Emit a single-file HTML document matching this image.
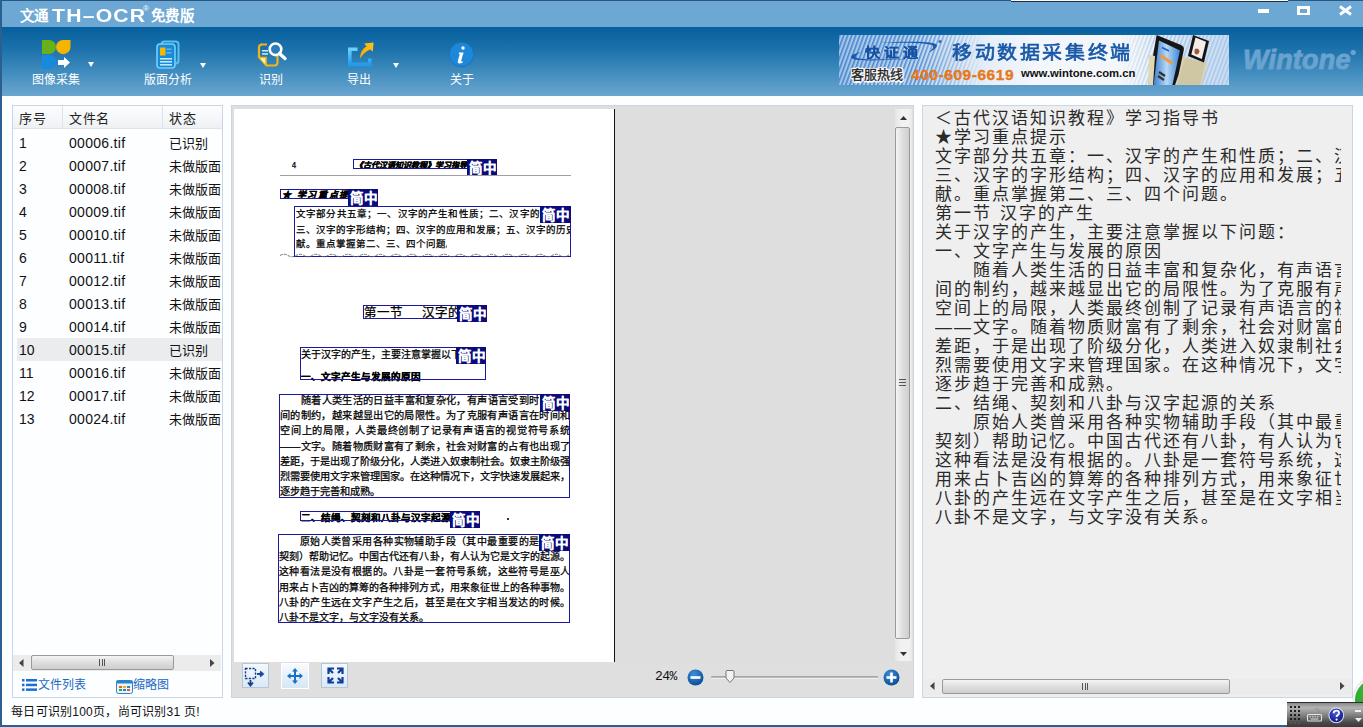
<!DOCTYPE html>
<html lang="zh-CN"><head><meta charset="utf-8">
<style>
*{margin:0;padding:0;box-sizing:border-box}
html,body{width:1363px;height:727px;overflow:hidden;background:#fdfeff;font-family:"Liberation Sans",sans-serif;position:relative}
.a{position:absolute}
.nw{white-space:nowrap}
#titlebar{left:0;top:0;width:1363px;height:27px;background:#6da8d5;border-top:1px solid #2a5780}
#toolbar{left:0;top:27px;width:1363px;height:69px;background:linear-gradient(#06609d 0%,#1a70aa 30%,#3a88bb 60%,#6ba6d0 100%)}
#lborder{left:0;top:0;width:2px;height:727px;background:#2b5f8e}
#bborder{left:0;top:725px;width:1363px;height:2px;background:#2b5f8e}
.tbtxt{color:#fff;font-size:12px;line-height:14px;letter-spacing:0px}
.tri{width:0;height:0;border-left:3.5px solid transparent;border-right:3.5px solid transparent;border-top:5px solid #fff}
.panel{border:1px solid #c9d7e4}
.row{position:absolute;left:0;height:23px;width:222px;white-space:nowrap;font-size:14px;line-height:23px;color:#111}
.row span{position:absolute}.row span+span{letter-spacing:0.3px}.row span+span+span{letter-spacing:0;font-size:13px}
.sb-h{background:#ebebeb}
.thumbh{background:linear-gradient(#f4f4f4,#dcdcdc 55%,#cfcfcf);border:1px solid #9a9a9a;border-radius:2px}
.thumbv{background:linear-gradient(90deg,#f4f4f4,#dcdcdc 55%,#cfcfcf);border:1px solid #9a9a9a;border-radius:2px}
.doc{font-size:10.4px;line-height:15.3px;color:#000;white-space:nowrap;overflow:hidden;-webkit-text-stroke:0.25px #000}
.bx{position:absolute;border:1px solid #1a1aa0}
.lbl{position:absolute;background:#0b0b7e;color:#fff;font-weight:bold;-webkit-text-stroke:0.2px #fff;font-size:13.5px;text-align:center;letter-spacing:1.5px;text-indent:1.5px;white-space:nowrap;overflow:hidden;padding-top:1px}
#rtext{left:935px;top:109px;width:406px;height:560px;overflow:hidden;font-size:17px;line-height:19px;letter-spacing:2px;color:#2a2a2a;white-space:nowrap}
</style></head><body>

<!-- title bar -->
<div id="titlebar" class="a"></div>
<div class="a nw" style="left:20px;top:8px;color:#fff;font-weight:bold;font-size:14.5px;line-height:16px;letter-spacing:0.3px">文通</div><div id="thocr" class="a nw" style="left:52px;top:7px;color:#fff;font-weight:bold;font-size:17.5px;line-height:19px;transform:scaleX(1.21);transform-origin:0 0;letter-spacing:1px">TH–OCR</div><div class="a nw" style="left:143px;top:5px;color:#fff;font-size:8px;line-height:8px">®</div><div class="a nw" style="left:151px;top:8px;color:#fff;font-weight:bold;font-size:14.5px;line-height:16px;letter-spacing:0.3px">免费版</div>
<div class="a" style="left:1011px;top:0;width:277px;height:1px;background:#fafafa"></div><div class="a" style="left:1011px;top:1px;width:277px;height:1px;background:#1c2f44"></div>
<!-- window controls -->
<div class="a" style="left:1258px;top:9px;width:11px;height:4px;background:#fff"></div>
<div class="a" style="left:1297px;top:6px;width:13px;height:9px;border:3px solid #fff;border-top-width:3.5px;border-bottom-width:2px"></div>
<svg class="a" style="left:1338px;top:5px" width="15" height="11" viewBox="0 0 15 11"><path d="M2 1.5 L13 9.5 M13 1.5 L2 9.5" stroke="#fff" stroke-width="2.8"/></svg>

<!-- toolbar -->
<div id="toolbar" class="a"></div>

<!-- icon 1 -->
<svg class="a" style="left:40px;top:38px" width="34" height="34" viewBox="0 0 34 34">
<path d="M2 2 H9 A7 7 0 0 1 9 16 H2 Z" fill="#6ab018"/>
<path d="M30.5 2 V9 A7 7 0 0 1 16 9 A7 7 0 0 1 23 2 Z" fill="#f5b400"/>
<path d="M2 17 H9 A7 7 0 0 1 9 31 H2 Z" fill="#1789de"/>
<path d="M18 22 H24 V19 L30 24.5 L24 30 V27 H18 Z" fill="#fff"/>
</svg>
<div class="a tri" style="left:87.5px;top:62px"></div>
<div class="a tbtxt nw" style="left:32px;top:73px">图像采集</div>

<!-- icon 2 -->
<svg class="a" style="left:154px;top:39px" width="28" height="32" viewBox="0 0 28 32">
<rect x="7.5" y="2.5" width="17" height="22" rx="3" fill="none" stroke="#58c1f2" stroke-width="2"/>
<rect x="3" y="5" width="18" height="24" rx="3" fill="#1b8ad6" stroke="#6fd0ff" stroke-width="1.6"/>
<rect x="6" y="8.5" width="5.5" height="8" fill="#f7b800"/>
<rect x="12.5" y="9.5" width="5" height="1.6" fill="#5ab8ee"/>
<rect x="12.5" y="13" width="5" height="1.6" fill="#5ab8ee"/>
<rect x="6" y="19" width="12" height="1.6" fill="#bfe8ff"/>
<rect x="6" y="22" width="12" height="1.6" fill="#bfe8ff"/>
<rect x="6" y="25" width="12" height="1.6" fill="#bfe8ff"/>
</svg>
<div class="a tri" style="left:199.5px;top:62.5px"></div>
<div class="a tbtxt nw" style="left:144px;top:73px">版面分析</div>

<!-- icon 3 -->
<svg class="a" style="left:256px;top:40px" width="32" height="30" viewBox="0 0 32 30">
<path d="M5 4.5 H11 M3 7 V17 L10.5 25.5 H19 A3 3 0 0 0 21.5 22.5 V16" fill="none" stroke="#f2b418" stroke-width="2.2" stroke-linejoin="round"/>
<path d="M3 7 A3 3 0 0 1 6 4.5" fill="none" stroke="#f2b418" stroke-width="2.2"/>
<path d="M3.5 17.5 L10 17.5 L10 25" fill="#fff3b0" stroke="#f2b418" stroke-width="1.6"/>
<rect x="6" y="10" width="6" height="1.5" fill="#cfeaff"/>
<rect x="6" y="13.2" width="6" height="1.5" fill="#cfeaff"/>
<circle cx="19.5" cy="9.3" r="5.8" fill="#2a7db8" stroke="#fff" stroke-width="2.6"/>
<path d="M23.5 13.5 L29 18.5" stroke="#fff" stroke-width="3.4" stroke-linecap="round"/>
</svg>
<div class="a tbtxt nw" style="left:259px;top:73px">识别</div>

<!-- icon 4 -->
<svg class="a" style="left:346px;top:40px" width="30" height="28" viewBox="0 0 30 28">
<defs><linearGradient id="g4" x1="0" y1="0" x2="0" y2="1"><stop offset="0" stop-color="#6cd0ff"/><stop offset="1" stop-color="#1f9cec"/></linearGradient>
<linearGradient id="g4b" x1="0" y1="1" x2="1" y2="0"><stop offset="0" stop-color="#f5a800"/><stop offset="1" stop-color="#ffc21a"/></linearGradient></defs>
<path d="M11.5 9.2 H3.8 V24.4 H23.8 V18.5" fill="none" stroke="url(#g4)" stroke-width="3.6"/>
<path d="M14 18.5 C14.2 12.5 16.8 8.6 20.6 6.6 L18.2 3.6 L27.6 2.4 L26.8 11.8 L24.2 9.4 C20.2 11 16.8 14 14 18.5 Z" fill="url(#g4b)"/>
</svg>
<div class="a tri" style="left:392.5px;top:62.5px"></div>
<div class="a tbtxt nw" style="left:347px;top:73px">导出</div>

<!-- icon 5 -->
<svg class="a" style="left:448px;top:41px" width="28" height="28" viewBox="0 0 28 28">
<circle cx="13.5" cy="13.5" r="12.2" fill="#1e88d8" stroke="#1470b8" stroke-width="0.8"/>
<circle cx="15" cy="7" r="1.7" fill="#fff"/>
<path d="M11 11.5 H15.6 L13.2 19.5 Q13 21 14.8 20.4 L14.6 21.7 Q12.5 22.6 10.6 22.3 Q9.2 21.9 9.8 20 L11.7 13.2 L10.8 13 Z" fill="#fff"/>
</svg>
<div class="a tbtxt nw" style="left:450px;top:73px">关于</div>

<!-- banner -->
<div class="a" style="left:839px;top:35px;width:390px;height:50px;overflow:hidden;background:linear-gradient(90deg,#a2c4ea 0%,#b9d3ee 18%,#dfeaf6 32%,#f3f6fa 50%,#f4f7fa 75%,#d6e6f6 90%,#c9dcf2 100%)">
<svg class="a" style="left:0;top:0" width="390" height="50" viewBox="0 0 390 50">
<defs>
<pattern id="st" width="4" height="50" patternUnits="userSpaceOnUse" patternTransform="skewX(-20)"><rect x="0" y="0" width="1.7" height="50" fill="#4a86cc"/></pattern>
<pattern id="st2" width="4" height="50" patternUnits="userSpaceOnUse" patternTransform="skewX(-20)"><rect x="0" y="0" width="1.6" height="50" fill="#a9c6e8"/></pattern>
<linearGradient id="fd" x1="0" x2="1"><stop offset="0" stop-color="#fff" stop-opacity="1"/><stop offset="0.55" stop-color="#fff" stop-opacity="0.9"/><stop offset="1" stop-color="#fff" stop-opacity="0"/></linearGradient>
<mask id="mk"><rect x="0" y="0" width="145" height="50" fill="url(#fd)"/></mask>
<linearGradient id="fd2" x1="0" x2="1"><stop offset="0" stop-color="#fff" stop-opacity="0"/><stop offset="0.4" stop-color="#fff" stop-opacity="1"/></linearGradient>
<mask id="mk2"><rect x="280" y="0" width="110" height="50" fill="url(#fd2)"/></mask>
<linearGradient id="scr" x1="0" y1="0" x2="1" y2="0"><stop offset="0" stop-color="#3a7fd0"/><stop offset="0.5" stop-color="#b6d8f4"/><stop offset="1" stop-color="#3f86d6"/></linearGradient>
</defs>
<rect x="0" y="0" width="145" height="50" fill="url(#st)" mask="url(#mk)"/>
<rect x="280" y="0" width="110" height="50" fill="url(#st2)" mask="url(#mk2)"/>
<path d="M22 17 C14 19 10 21 13 23.5 C18 26.5 45 25.5 72 23.8 C48 24.5 20 25 17 22.5 C15.5 21 18 19 22 17 Z" fill="#1a5aae"/>
<path d="M41 8 C60 6.5 90 6 97 9 C100 11 95 15 90 17.5 C93 14.5 96 11.5 93 10 C88 8 60 7.5 41 8 Z" fill="#1a5aae"/>
<circle cx="101" cy="6.5" r="1.6" fill="#3a6fb8"/>
<g>
<path d="M343 21.6 L368.8 27.8 L362.6 50 L334 50 Z" fill="#d9d2b4"/>
<path d="M346 23 L366 28 L361 50 L338 50 Z" fill="#cfc6a4"/>
<path d="M354 0 L370 6 L365 27.5 L349 21 Z" fill="#151515"/>
<path d="M356.5 2.5 L367 6.8 L362.8 24 L352.3 19.5 Z" fill="#f3eee9"/>
<path d="M356 14 Q359 12.5 360.5 16 Q360 19.5 357 19.5 Q354.5 18 356 14 Z" fill="#9a5a3a"/>
<path d="M317.6 0 L342 10 Q345.5 11.5 344.8 15 L339.5 40 L336 50 L309 50 Z" fill="#161616"/>
<path d="M320 5.5 L341 15.5 L333.4 50 L314.5 50 Z" fill="url(#scr)"/>
<path d="M323 12.5 L330 16" stroke="#1f5cb8" stroke-width="1.4"/>
<path d="M321.5 20.5 L333.5 28.5" stroke="#f39a3a" stroke-width="3.2"/>
<path d="M320 37 L326 41 M319 41 L325 45" stroke="#333" stroke-width="2.2"/>
<path d="M310 20 L316 21 L314 50 L309 50 Z" fill="#e0d8b4"/>
</g>
</svg>
<div class="a nw" style="left:26px;top:8.5px;font-size:15px;font-weight:bold;color:#1553a6;letter-spacing:4px;line-height:17px;transform:scale(1.0,0.85);transform-origin:0 50%;-webkit-text-stroke:0.4px #1553a6;text-shadow:0 0 2px #fff">快证通</div>
<div class="a nw" style="left:113px;top:5.5px;font-size:20px;color:#1858a8;letter-spacing:2.6px;line-height:22px;-webkit-text-stroke:0.7px #1858a8;transform:scaleY(0.92);transform-origin:0 100%">移动数据采集终端</div>
<div class="a nw" style="left:12px;top:32px;font-size:13px;color:#222;line-height:15px;letter-spacing:0.1px;-webkit-text-stroke:0.3px #222;text-shadow:1.5px 0 0 #fff,-1.5px 0 0 #fff,0 1.5px 0 #fff,0 -1.5px 0 #fff,1px 1px 0 #fff,-1px -1px 0 #fff,1px -1px 0 #fff,-1px 1px 0 #fff,0 0 3px #fff">客服热线</div>
<div class="a nw" style="left:72px;top:31px;font-size:15.5px;font-weight:bold;color:#e8771a;line-height:17px;letter-spacing:0.55px;-webkit-text-stroke:0.3px #e8771a">400-609-6619</div>
<div class="a nw" style="left:182px;top:32px;font-size:11.3px;font-weight:bold;color:#111;line-height:13px">www.wintone.com.cn</div>
</div>
<div class="a nw" style="left:1243px;top:36px;font-size:27px;font-weight:bold;font-style:italic;color:#6aa3cf;line-height:34px;letter-spacing:0.2px;-webkit-text-stroke:0.9px #6aa3cf">Wintone<sup style="font-size:6px;vertical-align:14px">®</sup></div>

<!-- LEFT PANEL -->
<div class="a panel" style="left:12px;top:105px;width:211px;height:593px;background:#fdfeff"></div>
<div class="a" style="left:13px;top:106px;width:209px;height:23px;background:linear-gradient(#fdfdfe,#eef1f4);border-bottom:1px solid #dfe4ea"></div>
<div class="a" style="left:62px;top:106px;width:1px;height:23px;background:#dde3ea"></div>
<div class="a" style="left:162px;top:106px;width:1px;height:23px;background:#dde3ea"></div>
<div class="a nw" style="left:19px;top:111px;font-size:13px;line-height:16px;color:#222;letter-spacing:0.5px">序号</div>
<div class="a nw" style="left:69px;top:111px;font-size:13px;line-height:16px;color:#222;letter-spacing:0.5px">文件名</div>
<div class="a nw" style="left:169px;top:111px;font-size:13px;line-height:16px;color:#222;letter-spacing:0.5px">状态</div>
<div class="a" style="left:17px;top:338px;width:205px;height:23px;background:#ebeced"></div>
<div id="rows" class="a" style="left:0;top:131px;width:222px;height:300px;overflow:hidden">
<div class="row" style="top:0.5px"><span style="left:19px">1</span><span style="left:69px">00006.tif</span><span style="left:169px">已识别</span></div>
<div class="row" style="top:23.5px"><span style="left:19px">2</span><span style="left:69px">00007.tif</span><span style="left:169px">未做版面</span></div>
<div class="row" style="top:46.5px"><span style="left:19px">3</span><span style="left:69px">00008.tif</span><span style="left:169px">未做版面</span></div>
<div class="row" style="top:69.5px"><span style="left:19px">4</span><span style="left:69px">00009.tif</span><span style="left:169px">未做版面</span></div>
<div class="row" style="top:92.5px"><span style="left:19px">5</span><span style="left:69px">00010.tif</span><span style="left:169px">未做版面</span></div>
<div class="row" style="top:115.5px"><span style="left:19px">6</span><span style="left:69px">00011.tif</span><span style="left:169px">未做版面</span></div>
<div class="row" style="top:138.5px"><span style="left:19px">7</span><span style="left:69px">00012.tif</span><span style="left:169px">未做版面</span></div>
<div class="row" style="top:161.5px"><span style="left:19px">8</span><span style="left:69px">00013.tif</span><span style="left:169px">未做版面</span></div>
<div class="row" style="top:184.5px"><span style="left:19px">9</span><span style="left:69px">00014.tif</span><span style="left:169px">未做版面</span></div>
<div class="row" style="top:207.5px"><span style="left:19px">10</span><span style="left:69px">00015.tif</span><span style="left:169px">已识别</span></div>
<div class="row" style="top:230.5px"><span style="left:19px">11</span><span style="left:69px">00016.tif</span><span style="left:169px">未做版面</span></div>
<div class="row" style="top:253.5px"><span style="left:19px">12</span><span style="left:69px">00017.tif</span><span style="left:169px">未做版面</span></div>
<div class="row" style="top:276.5px"><span style="left:19px">13</span><span style="left:69px">00024.tif</span><span style="left:169px">未做版面</span></div>
</div>
<!-- left h-scrollbar -->
<div class="a sb-h" style="left:13px;top:655px;width:208px;height:16px;background:#ececec"></div>
<svg class="a" style="left:19px;top:659px" width="5" height="8"><path d="M4.5 0 V8 L0 4Z" fill="#444"/></svg>
<svg class="a" style="left:210px;top:659px" width="5" height="8"><path d="M0 0 V8 L4.5 4Z" fill="#444"/></svg>
<div class="a thumbh" style="left:31px;top:655px;width:143px;height:15px"></div>
<div class="a" style="left:99px;top:659px;width:6px;height:7px;border-left:1px solid #555;border-right:1px solid #555"><div style="margin-left:2px;width:1px;height:7px;background:#555"></div></div>
<!-- tabs -->
<svg class="a" style="left:22px;top:679px" width="15" height="12" viewBox="0 0 15 12"><g fill="#1a70d0"><rect x="0" y="0" width="2.5" height="2.5"/><rect x="4" y="0" width="11" height="2.5"/><rect x="0" y="4.7" width="2.5" height="2.5"/><rect x="4" y="4.7" width="11" height="2.5"/><rect x="0" y="9.4" width="2.5" height="2.5"/><rect x="4" y="9.4" width="11" height="2.5"/></g></svg>
<div class="a nw" style="left:38px;top:678px;font-size:12px;line-height:14px;color:#1c68c4">文件列表</div>
<svg class="a" style="left:116px;top:680px" width="17" height="14" viewBox="0 0 17 14"><rect x="0.5" y="0.5" width="16" height="13" rx="2" fill="#eaf4fb" stroke="#2a82c8"/><rect x="0.5" y="0.5" width="16" height="3" fill="#2a82c8"/><rect x="3" y="6" width="3" height="2" fill="#e85a20"/><rect x="7" y="6" width="3" height="2" fill="#f0b000"/><rect x="11" y="6" width="3" height="2" fill="#2a82c8"/><rect x="3" y="9" width="3" height="2" fill="#3aa040"/><rect x="7" y="9" width="3" height="2" fill="#2a82c8"/><rect x="11" y="9" width="3" height="2" fill="#e85a20"/></svg>
<div class="a nw" style="left:133px;top:678px;font-size:12px;line-height:14px;color:#1c68c4">缩略图</div>

<!-- CENTER PANEL -->
<div class="a panel" style="left:231px;top:105px;width:683px;height:593px;background:#dfdfdf"></div>
<div class="a" style="left:232px;top:106px;width:663px;height:556px;background:#dedede"></div>
<div class="a" style="left:234px;top:109px;width:380px;height:553px;background:#fff"></div>
<div class="a" style="left:614px;top:109px;width:1px;height:553px;background:#111"></div>
<div id="doc">
<div class="a doc" style="left:291.5px;top:161px;width:9px;font-size:8.5px;line-height:9.6px;font-family:"Liberation Serif",serif;">4</div>
<div class="a doc" style="left:355px;top:160.7px;width:112px;font-size:8px;line-height:9.6px;font-weight:bold;text-align:justify;text-align-last:justify;font-style:italic;">《古代汉语知识教程》学习指导书</div>
<div class="bx" style="left:353px;top:159px;width:115px;height:10px"></div>
<div class="lbl" style="left:467px;top:159px;width:30px;height:17px;line-height:17px">简中</div>
<div class="a" style="left:280px;top:174.5px;width:291px;height:1.5px;background:#a0a0a0"></div>
<div class="a doc" style="left:282px;top:190.1px;width:66px;font-size:9px;line-height:10.8px;font-weight:bold;font-style:italic;letter-spacing:1.6px;">★ 学习重点提示</div>
<div class="bx" style="left:280px;top:189px;width:69px;height:10px"></div>
<div class="lbl" style="left:348px;top:189px;width:30px;height:17px;line-height:17px">简中</div>
<div class="a doc" style="left:296px;top:208.3px;width:264px;font-size:9.5px;line-height:11.4px;text-align:justify;text-align-last:justify;">文字部分共五章；一、汉字的产生和性质；二、汉字的字体</div>
<div class="a doc" style="left:296px;top:223.8px;width:274px;font-size:9.5px;line-height:11.4px;text-align:justify;text-align-last:justify;">三、汉字的字形结构；四、汉字的应用和发展；五、汉字的历史贡</div>
<div class="a doc" style="left:296px;top:237.8px;width:151px;font-size:9.5px;line-height:11.4px;text-align:justify;text-align-last:justify;">献。重点掌握第二、三、四个问题。</div>
<div class="bx" style="left:294px;top:206px;width:277px;height:51px"></div>
<div class="lbl" style="left:540px;top:206px;width:31px;height:17px;line-height:17px">简中</div>
<svg class="a" style="left:280px;top:253px" width="291" height="5"><path d="M0 2.5 Q4 0 8 2.5 Q12 5 16 2.5 Q20 0 24 2.5 Q28 5 32 2.5 Q36 0 40 2.5 Q44 5 48 2.5 Q52 0 56 2.5 Q60 5 64 2.5 Q68 0 72 2.5 Q76 5 80 2.5 Q84 0 88 2.5 Q92 5 96 2.5 Q100 0 104 2.5 Q108 5 112 2.5 Q116 0 120 2.5 Q124 5 128 2.5 Q132 0 136 2.5 Q140 5 144 2.5 Q148 0 152 2.5 Q156 5 160 2.5 Q164 0 168 2.5 Q172 5 176 2.5 Q180 0 184 2.5 Q188 5 192 2.5 Q196 0 200 2.5 Q204 5 208 2.5 Q212 0 216 2.5 Q220 5 224 2.5 Q228 0 232 2.5 Q236 5 240 2.5 Q244 0 248 2.5 Q252 5 256 2.5 Q260 0 264 2.5 Q268 5 272 2.5 Q276 0 280 2.5 Q284 5 288 2.5 Q292 0 296 2.5" fill="none" stroke="#666" stroke-width="0.9" stroke-dasharray="3 1"/></svg>
<div class="a doc" style="left:364px;top:305.5px;width:93px;font-size:12.5px;line-height:15.0px;">第一节<span style="display:inline-block;width:19px"></span>汉字的产生</div>
<div class="bx" style="left:363px;top:305px;width:95px;height:14px"></div>
<div class="lbl" style="left:457px;top:305px;width:30px;height:17px;line-height:17px">简中</div>
<div class="a doc" style="left:301px;top:349.0px;width:179px;font-size:10px;line-height:12.0px;">关于汉字的产生，主要注意掌握以下问题：</div>
<div class="a doc" style="left:301px;top:370.8px;width:124px;font-size:9.5px;line-height:11.4px;font-weight:bold;">一、文字产生与发展的原因</div>
<div class="bx" style="left:300px;top:347px;width:186px;height:33px"></div>
<div class="lbl" style="left:456px;top:347px;width:30px;height:17px;line-height:17px">简中</div>
<div class="a doc" style="left:280px;top:394.6px;width:259px;font-size:10.2px;line-height:12.2px;text-align:justify;text-align-last:justify;">　　随着人类生活的日益丰富和复杂化，有声语言受到时</div>
<div class="a doc" style="left:280px;top:409.9px;width:290px;font-size:10.2px;line-height:12.2px;text-align:justify;text-align-last:justify;">间的制约，越来越显出它的局限性。为了克服有声语言在时间和</div>
<div class="a doc" style="left:280px;top:425.2px;width:290px;font-size:10.2px;line-height:12.2px;text-align:justify;text-align-last:justify;">空间上的局限，人类最终创制了记录有声语言的视觉符号系统</div>
<div class="a doc" style="left:280px;top:440.5px;width:290px;font-size:10.2px;line-height:12.2px;text-align:justify;text-align-last:justify;">——文字。随着物质财富有了剩余，社会对财富的占有也出现了</div>
<div class="a doc" style="left:280px;top:455.8px;width:290px;font-size:10.2px;line-height:12.2px;text-align:justify;text-align-last:justify;">差距，于是出现了阶级分化，人类进入奴隶制社会。奴隶主阶级强</div>
<div class="a doc" style="left:280px;top:471.1px;width:290px;font-size:10.2px;line-height:12.2px;text-align:justify;text-align-last:justify;">烈需要使用文字来管理国家。在这种情况下，文字快速发展起来，</div>
<div class="a doc" style="left:280px;top:486.4px;width:98px;font-size:10.2px;line-height:12.2px;text-align:justify;text-align-last:justify;">逐步趋于完善和成熟。</div>
<div class="bx" style="left:279px;top:394px;width:291px;height:104px"></div>
<div class="lbl" style="left:540px;top:394px;width:30px;height:17px;line-height:17px">简中</div>
<div class="a doc" style="left:301px;top:511.8px;width:149px;font-size:9.5px;line-height:11.4px;font-weight:bold;text-align:justify;text-align-last:justify;">二、结绳、契刻和八卦与汉字起源</div>
<div class="bx" style="left:300px;top:511px;width:151px;height:10px"></div>
<div class="lbl" style="left:450px;top:511px;width:30px;height:17px;line-height:17px">简中</div>
<div class="a" style="left:507px;top:518px;width:2px;height:2px;background:#333"></div>
<div class="a doc" style="left:279px;top:535.6px;width:260px;font-size:10px;line-height:12.0px;text-align:justify;text-align-last:justify;">　　原始人类曾采用各种实物辅助手段（其中最重要的是</div>
<div class="a doc" style="left:279px;top:550.9px;width:291px;font-size:10px;line-height:12.0px;text-align:justify;text-align-last:justify;">契刻）帮助记忆。中国古代还有八卦，有人认为它是文字的起源。</div>
<div class="a doc" style="left:279px;top:566.2px;width:291px;font-size:10px;line-height:12.0px;text-align:justify;text-align-last:justify;">这种看法是没有根据的。八卦是一套符号系统，这些符号是巫人</div>
<div class="a doc" style="left:279px;top:581.5px;width:291px;font-size:10px;line-height:12.0px;text-align:justify;text-align-last:justify;">用来占卜吉凶的算筹的各种排列方式，用来象征世上的各种事物。</div>
<div class="a doc" style="left:279px;top:596.8px;width:291px;font-size:10px;line-height:12.0px;text-align:justify;text-align-last:justify;">八卦的产生远在文字产生之后，甚至是在文字相当发达的时候。</div>
<div class="a doc" style="left:279px;top:612.1px;width:146px;font-size:10px;line-height:12.0px;text-align:justify;text-align-last:justify;">八卦不是文字，与文字没有关系。</div>
<div class="bx" style="left:278px;top:534px;width:292px;height:89px"></div>
<div class="lbl" style="left:539px;top:534px;width:31px;height:17px;line-height:17px">简中</div>
</div>
<!-- v scrollbar -->
<div class="a" style="left:895px;top:109px;width:17px;height:552px;background:linear-gradient(90deg,#e6e6e6,#f2f2f2 40%,#f2f2f2 80%,#e8e8e8)"></div>
<svg class="a" style="left:900px;top:116px" width="7" height="4"><path d="M0 4 H7 L3.5 0Z" fill="#333"/></svg>
<svg class="a" style="left:900px;top:652px" width="7" height="4"><path d="M0 0 H7 L3.5 4Z" fill="#333"/></svg>
<div class="a thumbv" style="left:895px;top:127px;width:15px;height:512px"></div>
<div class="a" style="left:899px;top:379px;width:7px;height:7px;border-top:1px solid #555;border-bottom:1px solid #555"><div style="margin-top:2px;height:1px;background:#555"></div></div>
<!-- bottom toolbar buttons -->
<div class="a" style="left:242px;top:663px;width:27px;height:25px;border:1px solid #b6c6d6;background:linear-gradient(#f4f9fd,#d9e9f6)"></div>
<svg class="a" style="left:244px;top:667px" width="22" height="20" viewBox="0 0 22 20"><rect x="1.5" y="1.5" width="10" height="10" fill="none" stroke="#1a3e8c" stroke-width="1.4" stroke-dasharray="2.2 1.3"/><path d="M13 7 H18 M16 4.5 L19 7 L16 9.5" fill="none" stroke="#1a4aa0" stroke-width="1.8"/><path d="M6.5 13 V18 M4 15.5 L6.5 18.5 L9 15.5" fill="none" stroke="#1a3e8c" stroke-width="1.8"/></svg>
<div class="a" style="left:281px;top:663px;width:28px;height:26px;border:1px solid #fff;background:linear-gradient(#f8fbfe,#d4e6f6)"></div>
<svg class="a" style="left:287px;top:668px" width="16" height="16" viewBox="0 0 16 16"><g fill="#1a70c8"><rect x="7" y="3" width="2" height="10"/><rect x="3" y="7" width="10" height="2"/><path d="M8 0 L11 3.5 H5Z M8 16 L11 12.5 H5Z M0 8 L3.5 5 V11Z M16 8 L12.5 5 V11Z"/></g></svg>
<div class="a" style="left:321px;top:663px;width:27px;height:25px;border:1px solid #b6c6d6;background:linear-gradient(#f4f9fd,#d9e9f6)"></div>
<svg class="a" style="left:327px;top:667px" width="17" height="17" viewBox="0 0 17 17"><g fill="none" stroke="#0f3e9a" stroke-width="2.2"><path d="M1.5 7 V1.5 H7 M1.5 1.5 L6 6"/><path d="M10 1.5 H15.5 V7 M15.5 1.5 L11 6"/><path d="M1.5 10 V15.5 H7 M1.5 15.5 L6 11"/><path d="M15.5 10 V15.5 H10 M15.5 15.5 L11 11"/></g></svg>
<div class="a nw" style="left:655px;top:670px;font-size:13px;line-height:14px;color:#111;font-family:'Liberation Mono',monospace;letter-spacing:-0.5px">24%</div>
<svg class="a" style="left:687px;top:669px" width="17" height="17" viewBox="0 0 17 17"><defs><radialGradient id="gb" cx="40%" cy="30%" r="70%"><stop offset="0" stop-color="#3c8fd8"/><stop offset="1" stop-color="#0b4f96"/></radialGradient></defs><circle cx="8.5" cy="8.5" r="8" fill="url(#gb)"/><rect x="3.5" y="7.2" width="10" height="2.6" fill="#fff"/></svg>
<div class="a" style="left:711px;top:676px;width:167px;height:3px;background:linear-gradient(#9c9c9c,#c4c4c4);border-bottom:1px solid #f0f0f0;border-radius:1px"></div>
<svg class="a" style="left:725px;top:670px" width="10" height="13" viewBox="0 0 10 13"><path d="M1 1.5 Q1 0.5 2 0.5 H8 Q9 0.5 9 1.5 V8 L5 12.5 L1 8 Z" fill="#f2f2f2" stroke="#777"/></svg>
<svg class="a" style="left:883px;top:669px" width="17" height="17" viewBox="0 0 17 17"><circle cx="8.5" cy="8.5" r="8" fill="url(#gb)"/><rect x="3.5" y="7.2" width="10" height="2.6" fill="#fff"/><rect x="7.2" y="3.5" width="2.6" height="10" fill="#fff"/></svg>

<!-- RIGHT PANEL -->
<div class="a panel" style="left:922px;top:105px;width:431px;height:593px;background:#efefef"></div>
<div id="rtext" class="a">＜古代汉语知识教程》学习指导书<br>★学习重点提示<br>文字部分共五章：一、汉字的产生和性质；二、汉字的起源；<br>三、汉字的字形结构；四、汉字的应用和发展；五、汉字的历史贡<br>献。重点掌握第二、三、四个问题。<br>第一节<span style="display:inline-block;width:8px"></span>汉字的产生<br>关于汉字的产生，主要注意掌握以下问题：<br>一、文字产生与发展的原因<br><span style="display:inline-block;width:38px"></span>随着人类生活的日益丰富和复杂化，有声语言受到时<br>间的制约，越来越显出它的局限性。为了克服有声语言在时间和<br>空间上的局限，人类最终创制了记录有声语言的视觉符号系统<br>——文字。随着物质财富有了剩余，社会对财富的占有也出现了<br>差距，于是出现了阶级分化，人类进入奴隶制社会。奴隶主阶级强<br>烈需要使用文字来管理国家。在这种情况下，文字快速发展起来，<br>逐步趋于完善和成熟。<br>二、结绳、契刻和八卦与汉字起源的关系<br><span style="display:inline-block;width:38px"></span>原始人类曾采用各种实物辅助手段（其中最重要的是结绳和<br>契刻）帮助记忆。中国古代还有八卦，有人认为它是文字的起源。<br>这种看法是没有根据的。八卦是一套符号系统，这些符号是巫人<br>用来占卜吉凶的算筹的各种排列方式，用来象征世上的各种事物。<br>八卦的产生远在文字产生之后，甚至是在文字相当发达的时候。<br>八卦不是文字，与文字没有关系。</div>
<!-- right h-scrollbar -->
<div class="a" style="left:923px;top:679px;width:429px;height:16px;background:#ececec"></div>
<svg class="a" style="left:930px;top:682px" width="5" height="8"><path d="M4.5 0 V8 L0 4Z" fill="#444"/></svg>
<svg class="a" style="left:1340px;top:682px" width="5" height="8"><path d="M0 0 V8 L4.5 4Z" fill="#444"/></svg>
<div class="a thumbh" style="left:942px;top:679px;width:288px;height:15px"></div>
<div class="a" style="left:1082px;top:683px;width:6px;height:7px;border-left:1px solid #555;border-right:1px solid #555"><div style="margin-left:2px;width:1px;height:7px;background:#555"></div></div>

<!-- status -->
<div class="a nw" style="left:11px;top:704.5px;font-size:12px;line-height:14px;color:#111;letter-spacing:0.25px">每日可识别100页，尚可识别31 页!</div>

<div id="lborder" class="a"></div>
<div id="bborder" class="a"></div>
<!-- green circle + lang bar -->
<div class="a" style="left:1353px;top:677px;width:46px;height:46px;border-radius:50%;background:radial-gradient(circle at 40% 35%,#3cc03c,#1e8e1e);border:2px solid #f4f4f4;box-shadow:0 0 1px #777"></div>
<div class="a" style="left:1287px;top:702px;width:76px;height:25px;background:linear-gradient(#8a8a8a 0%,#b4b4b4 20%,#7a7a7a 55%,#4a4a4a 80%,#3a3a3a 100%);border-top:1px solid #2e2e2e"></div>
<svg class="a" style="left:1290px;top:706px" width="11" height="20" viewBox="0 0 11 20"><g fill="#1e1e1e">
<rect x="0" y="0" width="2" height="2"/><rect x="4" y="0" width="2" height="2"/><rect x="8" y="0" width="2" height="2"/>
<rect x="0" y="4" width="2" height="2"/><rect x="4" y="4" width="2" height="2"/><rect x="8" y="4" width="2" height="2"/>
<rect x="0" y="8" width="2" height="2"/><rect x="4" y="8" width="2" height="2"/><rect x="8" y="8" width="2" height="2"/>
<rect x="0" y="12" width="2" height="2"/><rect x="4" y="12" width="2" height="2"/><rect x="8" y="12" width="2" height="2"/>
<rect x="0" y="16" width="2" height="2" fill="#555"/><rect x="4" y="16" width="2" height="2" fill="#555"/><rect x="8" y="16" width="2" height="2" fill="#555"/></g></svg>
<svg class="a" style="left:1306px;top:708px" width="17" height="14" viewBox="0 0 17 14"><path d="M9 1 Q12 0 13 3 L13 6" fill="none" stroke="#888" stroke-width="0.8"/><rect x="1.5" y="6.5" width="14" height="6.5" rx="1" fill="none" stroke="#e4e4e4" stroke-width="1.1"/><g fill="#e4e4e4"><rect x="3.5" y="8.3" width="1.4" height="1"/><rect x="6" y="8.3" width="1.4" height="1"/><rect x="8.5" y="8.3" width="1.4" height="1"/><rect x="11" y="8.3" width="1.4" height="1"/><rect x="4.5" y="10.5" width="8" height="1"/></g></svg>
<svg class="a" style="left:1328px;top:707px" width="17" height="17" viewBox="0 0 17 17"><defs><radialGradient id="hq" cx="45%" cy="35%" r="65%"><stop offset="0" stop-color="#4a5ad8"/><stop offset="1" stop-color="#0c1580"/></radialGradient></defs><circle cx="8.3" cy="8.3" r="7.4" fill="url(#hq)" stroke="#d8dcf4" stroke-width="1.1"/><path d="M5.6 6.2 Q5.8 3.6 8.4 3.6 Q11 3.6 11 6 Q11 7.4 9.4 8.3 Q8.6 8.8 8.6 10" fill="none" stroke="#fff" stroke-width="1.9"/><circle cx="8.6" cy="12.6" r="1.1" fill="#fff"/></svg>
<div class="a" style="left:1355px;top:710px;width:6px;height:2px;background:#f0f0f0"></div>
<svg class="a" style="left:1355px;top:718px" width="7" height="5"><path d="M0 0 H7 L3.5 4Z" fill="#f0f0f0"/></svg>
</body></html>
